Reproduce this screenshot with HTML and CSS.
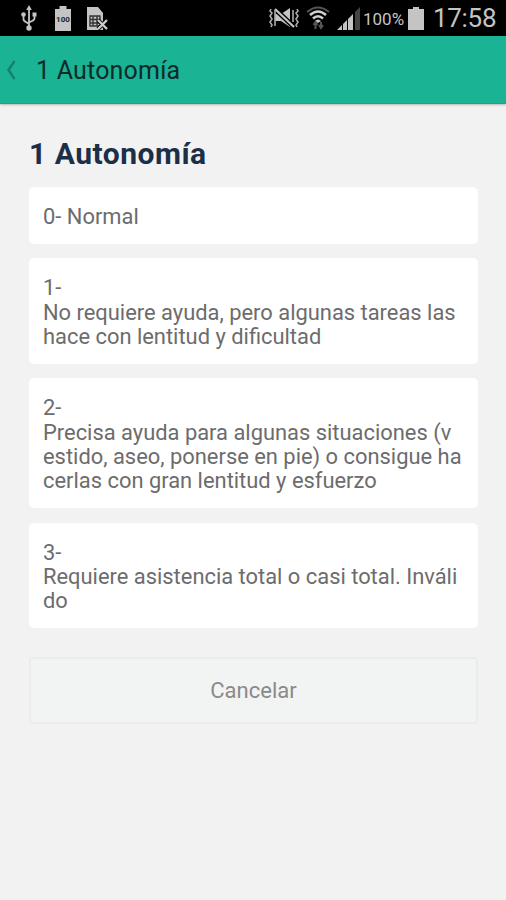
FILE: index.html
```html
<!DOCTYPE html>
<html lang="es">
<head>
    <meta charset="UTF-8">
    <title>1 Autonomía</title>
    <meta name="viewport" content="width=device-width, initial-scale=1">
    <link rel="stylesheet" href="styles.css">
</head>
<body>
<div class="statusbar">
    <div class="notifications">
        <svg class="ico usb" width="16" height="26" viewBox="0 0 16 26">
            <path d="M8 4V23M2.500 10V14Q2.500 16 5 17L8 19M13.500 10V13Q13.500 15 11 16L8 17.500" fill="none" stroke="#c4c4c4" stroke-width="1.800"/>
            <path d="M8 0L10.800 5H5.200z"/>
            <circle cx="8" cy="23" r="2.700"/>
            <circle cx="2.500" cy="9.500" r="2.300"/>
            <path d="M11.500 7.500h4v4h-4z"/>
        </svg>
        <svg class="ico full" width="16" height="25" viewBox="0 0 16 25">
            <path d="M4.500 0h7v3H16v22H0V3h4.500z"/>
            <text x="8" y="16" text-anchor="middle" class="level">100</text>
        </svg>
        <svg class="ico sim" width="21" height="25" viewBox="0 0 21 25">
            <path d="M0 1h11l5 6v17H0z"/>
            <path d="M3 10h10v10H3zM6 10v10M10 10v10M3 13.500h10M3 17h10" fill="none" stroke="#333" stroke-width="1.400"/>
            <path d="M11 14l9 9M20 14l-9 9" fill="none" stroke="#000" stroke-width="4"/>
            <path d="M11 14l9 9M20 14l-9 9" fill="none" stroke="#ccc" stroke-width="2.400"/>
        </svg>
    </div>
    <div class="system">
        <svg class="ico mute" width="30" height="22" viewBox="0 0 30 22">
            <path d="M6 7h6l9-6v19l-9-6H6z"/>
            <path d="M6 2l19 18" fill="none" stroke="#000" stroke-width="5"/>
            <path d="M6 2l19 18" fill="none" stroke="#c4c4c4" stroke-width="2.200"/>
            <path d="M2 2l-1 2 2 2-2 3 2 3-2 3 2 3-1 2M6 3v16M28 2l1 2-2 2 2 3-2 3 2 3-2 3 1 2M24 3v12" fill="none" stroke="#aaa" stroke-width="1.600"/>
        </svg>
        <svg class="ico wifi" width="24" height="24" viewBox="0 0 24 24">
            <path d="M1 6Q12-3 23 6" fill="none" stroke="#555" stroke-width="2"/>
            <path d="M4 9Q12 2 20 9M7 12.500Q12 8 17 12.500" fill="none" stroke="#d0d0d0" stroke-width="2.600"/>
            <path d="M9 15Q12 12 15 15L12 17z"/>
            <path d="M9.500 23v-6M7.500 19l2-3 2 3M15 16v6M13 19l2 3 2-3" fill="none" stroke="#555" stroke-width="2"/>
        </svg>
        <svg class="ico signal" width="24" height="23" viewBox="0 0 24 23">
            <path d="M0 23l5-5v5zM6 17l4-4v10H6zM11 12l5-5v16h-5z"/>
            <path d="M18 5l5-5v23h-5z" fill="#444"/>
        </svg>
        <span class="percent">100%</span>
        <svg class="ico battery" width="16" height="23" viewBox="0 0 16 23">
            <path d="M5 0h6v2h5v21H0V2h5z"/>
        </svg>
        <span class="clock">17:58</span>
    </div>
</div>
<div class="navbar">
    <svg class="back" width="10" height="20" viewBox="0 0 10 20"><path d="M8.500 1L2.500 10l6 9"/></svg>
    <span class="nav-title">1 Autonomía</span>
</div>
<div class="content">
    <h1>1 Autonomía</h1>
    <ul class="options">
        <li>0- Normal</li>
        <li>1-<br>No requiere ayuda, pero algunas tareas las<br>hace con lentitud y dificultad</li>
        <li>2-<br>Precisa ayuda para algunas situaciones (v<br>estido, aseo, ponerse en pie) o consigue ha<br>cerlas con gran lentitud y esfuerzo</li>
        <li>3-<br>Requiere asistencia total o casi total. Inváli<br>do</li>
    </ul>
    <button class="cancel" type="button">Cancelar</button>
</div>
</body>
</html>
```
FILE: styles.css
```css
*{ margin:0; padding:0; box-sizing:border-box; }
body{ font:22px/24.3px Roboto, "Liberation Sans", sans-serif; background:#f2f2f2; color:#6c6c6c; min-height:900px; }
ul, li{ list-style:none; }

.statusbar{ display:flex; justify-content:space-between; height:36px; padding:0 11px 0 21px; background:#000; color:#c4c4c4; }
.notifications, .system{ display:flex; align-items:center; }
.ico{ display:block; flex:none; fill:#c4c4c4; }
.full{ margin-left:18px; }
.sim{ margin-left:16px; }
.level{ font-size:8px; font-weight:bold; fill:#222; }
.wifi{ margin-left:7px; }
.signal{ margin-left:7px; }
.percent{ margin-left:2px; width:43px; padding-top:2px; font-size:17px; white-space:nowrap; }
.battery{ margin-left:2px; }
.clock{ margin-left:9px; width:62px; font-size:26px; letter-spacing:-.3px; white-space:nowrap; }

.navbar{ display:flex; align-items:center; height:68px; padding-left:6px; background:#1ab394; border-bottom:1px solid #1aa589; box-shadow:0 1px 2px rgba(0,0,0,.25); color:#0d2a2b; }
.back path{ fill:none; stroke:#157f70; stroke-width:2.4; }
.nav-title{ margin-left:20px; padding-top:4px; font-size:25px; letter-spacing:.2px; }

.content{ padding:33px 28px 0 29px; }
h1{ font-size:30px; line-height:34px; font-weight:bold; letter-spacing:.5px; color:#1b2f48; }
.options{ display:flex; flex-direction:column; gap:14.6px; margin-top:16px; }
.options li{ padding:18px 14px 14.5px; background:#fff; border-radius:5px; font-size:21.9px; white-space:nowrap; }
.cancel{ display:block; width:100%; height:67px; margin-top:28.500px; border:2px solid #ebeded; border-radius:4px; background:#f2f3f3; color:#8a8a8a; font:22px Roboto, "Liberation Sans", sans-serif; }
```
